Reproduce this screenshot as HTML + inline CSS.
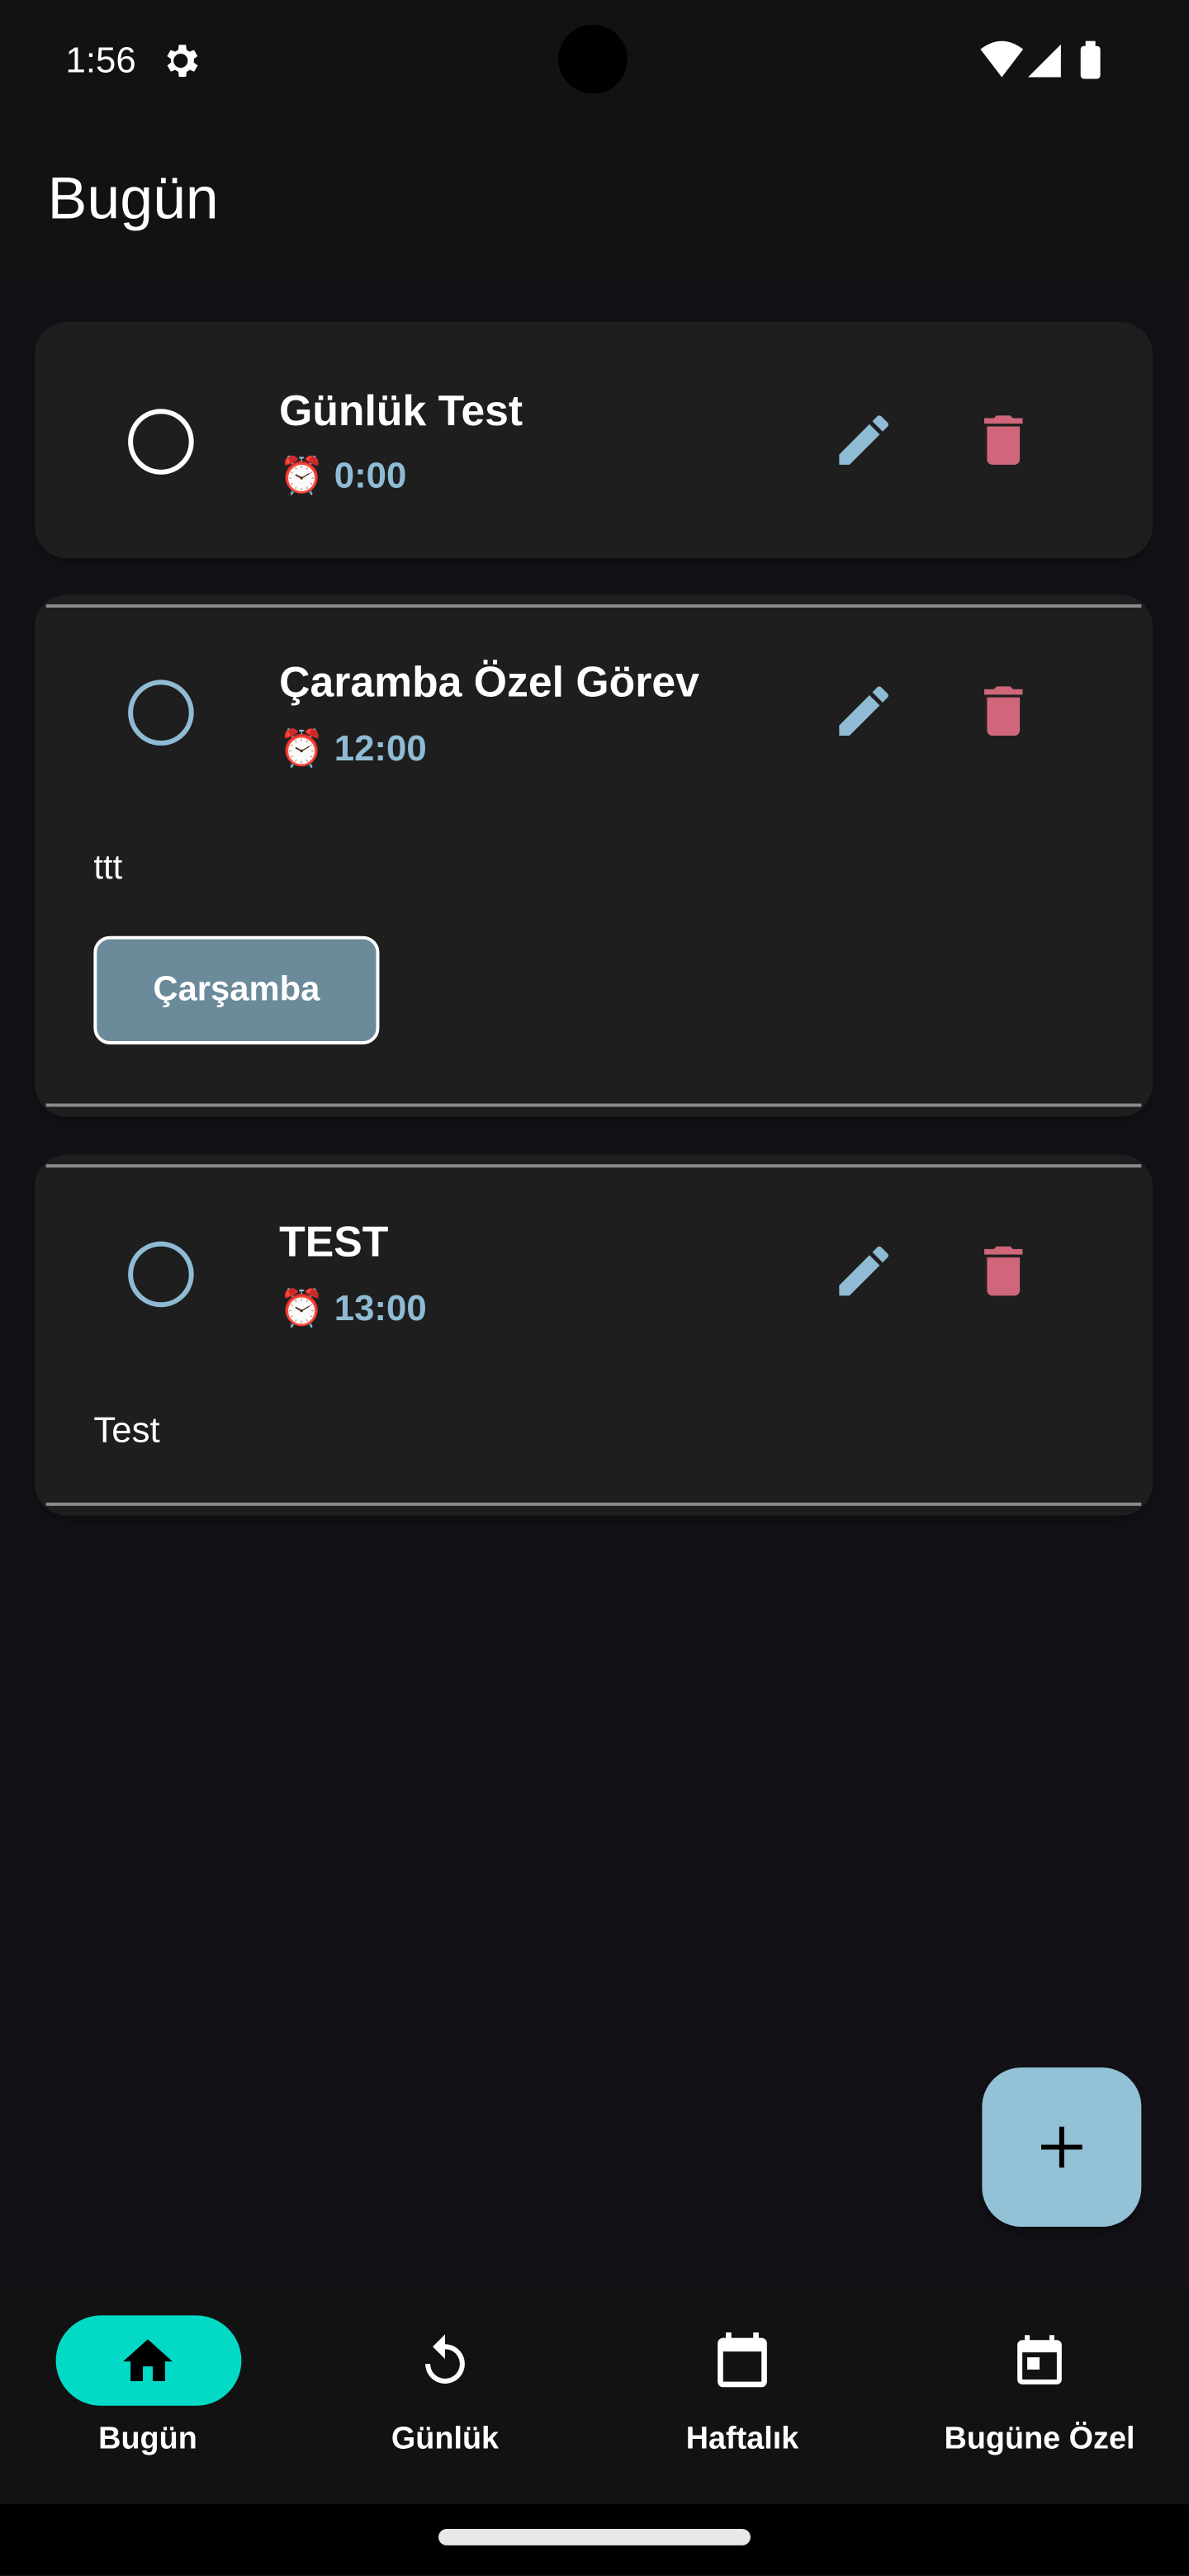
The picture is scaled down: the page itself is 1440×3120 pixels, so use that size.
<!DOCTYPE html>
<html><head><meta charset="utf-8"><style>
html,body{margin:0;padding:0;background:#141218;width:1440px;height:3120px;overflow:hidden}
#s{position:absolute;left:0;top:0;width:724px;height:1568px;transform:scale(1.98895);transform-origin:0 0;background:#141218;font-family:"Liberation Sans",sans-serif;color:#fff}
.a{position:absolute}
.card{position:absolute;left:21px;width:681px;background:#1e1e1e;border-radius:20px;box-shadow:0 3px 8px rgba(0,0,0,.35)}
.ln{position:absolute;left:7px;right:7px;height:2px;background:#8a8a8a}
.ttl{position:absolute;left:149px;font-size:26px;font-weight:bold;line-height:30px;white-space:nowrap}
.tm{position:absolute;left:149px;font-size:22px;font-weight:bold;color:#8fbcd4;line-height:26px;white-space:nowrap}
.chk{position:absolute;left:57px;width:34px;height:34px;border-radius:50%;border:3px solid #8fbcd4}
.nl{position:absolute;top:1475px;font-size:19px;font-weight:bold;width:180px;text-align:center}
</style></head><body><div id="s">
<div class="a" style="left:0;top:0;width:724px;height:171px;background:#121212"></div>
<div class="a" style="left:40px;top:24px;font-size:22px">1:56</div>
<svg class="a" style="left:97px;top:24px" width="26" height="26" viewBox="0 0 24 24"><path fill="#fff" d="M19.4 13a7.5 7.5 0 000-2l2.1-1.6-2-3.5-2.5 1a7 7 0 00-1.7-1L15 3h-4l-.4 2.9a7 7 0 00-1.7 1l-2.5-1-2 3.5L6.6 11a7.5 7.5 0 000 2l-2.1 1.6 2 3.5 2.5-1a7 7 0 001.7 1L11 21h4l.4-2.9a7 7 0 001.7-1l2.5 1 2-3.5zM12 16a4 4 0 110-8 4 4 0 010 8z"/></svg>
<div class="a" style="left:340px;top:15px;width:42px;height:42px;border-radius:50%;background:#000"></div>
<svg class="a" style="left:596px;top:24px" width="84" height="26" viewBox="0 0 84 26"><path fill="#fff" d="M1 6Q14-4 27 6L14 23z"/><path fill="#fff" d="M30 23L50 3V23z"/><rect x="62" y="4" width="12" height="20" rx="2" fill="#fff"/><rect x="65" y="1" width="6" height="4" fill="#fff"/></svg>
<div class="a" style="left:29px;top:100px;font-size:36px">Bugün</div>

<div class="card" style="top:196px;height:144px">
<div class="chk" style="top:53px;border-color:#fff"></div>
<div class="ttl" style="top:39px">Günlük Test</div>
<div class="tm" style="top:81px">⏰ 0:00</div>
</div>
<div class="card" style="top:362px;height:318px">
<div class="ln" style="top:6px"></div><div class="ln" style="top:310px"></div>
<div class="chk" style="top:52px"></div>
<div class="ttl" style="top:38px">Çaramba Özel Görev</div>
<div class="tm" style="top:81px">⏰ 12:00</div>
<div class="a" style="left:36px;top:155px;font-size:21px">ttt</div>
<div class="a" style="left:36px;top:208px;width:170px;height:62px;border:2px solid #fff;border-radius:10px;background:#6b8a9a;font-size:21px;font-weight:bold;text-align:center;line-height:62px">Çarşamba</div>
</div>
<div class="card" style="top:703px;height:220px">
<div class="ln" style="top:6px"></div><div class="ln" style="top:212px"></div>
<div class="chk" style="top:53px"></div>
<div class="ttl" style="top:38px">TEST</div>
<div class="tm" style="top:81px">⏰ 13:00</div>
<div class="a" style="left:36px;top:155px;font-size:22px">Test</div>
</div>

<svg class="a" style="left:506px;top:248px" width="40" height="40" viewBox="0 0 24 24"><path fill="#8fbcd4" d="M3 17.25V21h3.75L17.8 9.94l-3.75-3.75zM20.7 7.04a1 1 0 000-1.41l-2.34-2.34a1 1 0 00-1.41 0l-1.83 1.83 3.75 3.75z"/></svg>
<svg class="a" style="left:506px;top:413px" width="40" height="40" viewBox="0 0 24 24"><path fill="#8fbcd4" d="M3 17.25V21h3.75L17.8 9.94l-3.75-3.75zM20.7 7.04a1 1 0 000-1.41l-2.34-2.34a1 1 0 00-1.41 0l-1.83 1.83 3.75 3.75z"/></svg>
<svg class="a" style="left:506px;top:754px" width="40" height="40" viewBox="0 0 24 24"><path fill="#8fbcd4" d="M3 17.25V21h3.75L17.8 9.94l-3.75-3.75zM20.7 7.04a1 1 0 000-1.41l-2.34-2.34a1 1 0 00-1.41 0l-1.83 1.83 3.75 3.75z"/></svg>
<svg class="a" style="left:591px;top:248px" width="40" height="40" viewBox="0 0 24 24"><path fill="#cf6679" d="M6 19a2 2 0 002 2h8a2 2 0 002-2V7H6zM19 4h-3.5l-1-1h-5l-1 1H5v2h14z"/></svg>
<svg class="a" style="left:591px;top:413px" width="40" height="40" viewBox="0 0 24 24"><path fill="#cf6679" d="M6 19a2 2 0 002 2h8a2 2 0 002-2V7H6zM19 4h-3.5l-1-1h-5l-1 1H5v2h14z"/></svg>
<svg class="a" style="left:591px;top:754px" width="40" height="40" viewBox="0 0 24 24"><path fill="#cf6679" d="M6 19a2 2 0 002 2h8a2 2 0 002-2V7H6zM19 4h-3.5l-1-1h-5l-1 1H5v2h14z"/></svg>

<div class="a" style="left:598px;top:1259px;width:97px;height:97px;border-radius:24px;background:#93c1d6;box-shadow:0 3px 8px rgba(0,0,0,.4)"></div>
<svg class="a" style="left:632px;top:1293px" width="29" height="29" viewBox="0 0 29 29"><path d="M14.5 2v25M2 14.5h25" stroke="#000" stroke-width="3"/></svg>

<div class="a" style="left:0;top:1395px;width:724px;height:130px;background:#121212"></div>
<div class="a" style="left:34px;top:1410px;width:113px;height:55px;border-radius:28px;background:#03dac6"></div>
<svg class="a" style="left:72px;top:1420px" width="36" height="36" viewBox="0 0 24 24"><path d="M10 20v-6h4v6h5v-8h3L12 3 2 12h3v8z"/></svg>
<svg class="a" style="left:253px;top:1420px" width="36" height="36" viewBox="0 0 24 24"><path fill="#fff" d="M12 5V1L7 6l5 5V7a6 6 0 11-6 6H4a8 8 0 108-8z"/></svg>
<svg class="a" style="left:432px;top:1417px" width="40" height="40" viewBox="0 0 24 24"><path fill="#fff" d="M19 4h-1V2h-2v2H8V2H6v2H5a2 2 0 00-2 2v14a2 2 0 002 2h14a2 2 0 002-2V6a2 2 0 00-2-2zm0 16H5V9h14z"/></svg>
<svg class="a" style="left:615px;top:1418px" width="36" height="38" viewBox="0 0 24 24"><path fill="#fff" d="M19 4h-1V2h-2v2H8V2H6v2H5a2 2 0 00-2 2v14a2 2 0 002 2h14a2 2 0 002-2V6a2 2 0 00-2-2zm0 16H5V9h14zM7 11h5v5H7z"/></svg>
<div class="nl" style="left:0">Bugün</div>
<div class="nl" style="left:181px">Günlük</div>
<div class="nl" style="left:362px">Haftalık</div>
<div class="nl" style="left:543px">Bugüne Özel</div>
<div class="a" style="left:0;top:1525px;width:724px;height:43px;background:#000"></div>
<div class="a" style="left:267px;top:1540px;width:190px;height:10px;border-radius:5px;background:#e8e8e8"></div>
</div></body></html>
